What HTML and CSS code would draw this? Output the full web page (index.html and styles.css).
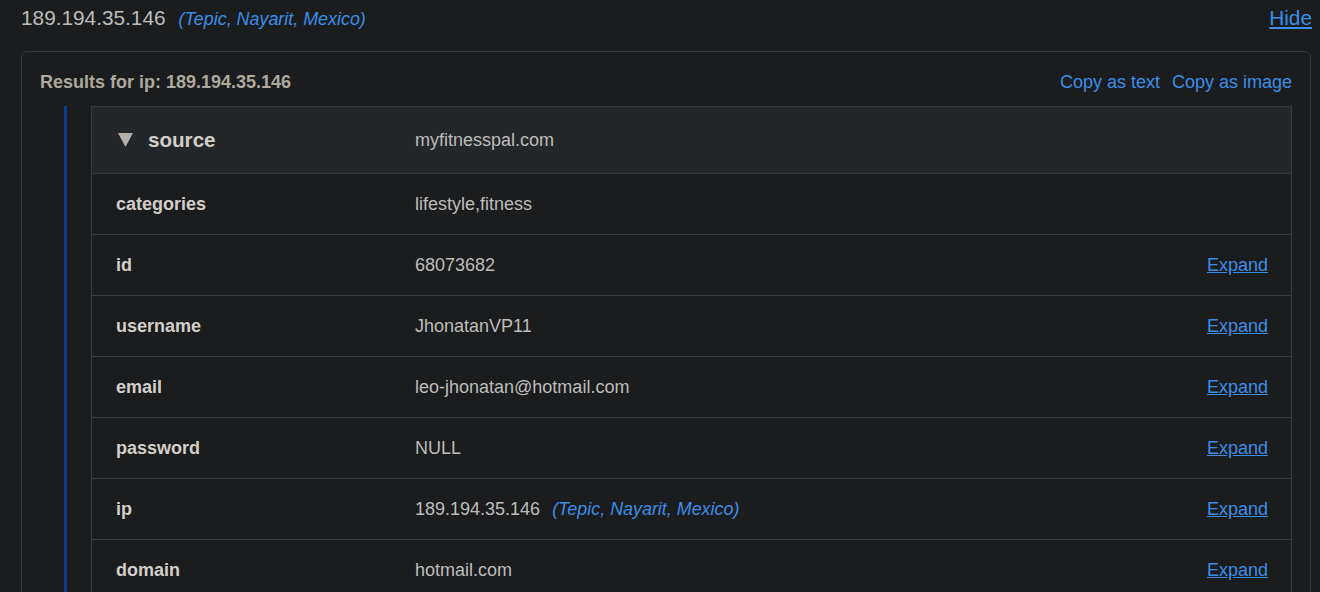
FILE: index.html
```html
<!DOCTYPE html>
<html lang="en">

<head>
  <meta charset="UTF-8">
  <meta name="viewport" content="width=device-width, initial-scale=1.0">
  <title>IP lookup results</title>
  <link rel="stylesheet" href="styles.css">
</head>

<body>
  <div class="lookup">
    <div class="lookup-head">
      <div class="lookup-title">
        <span class="ip">189.194.35.146</span>
        <span class="geo">(Tepic, Nayarit, Mexico)</span>
      </div>
      <a href="#" class="hide-link">Hide</a>
    </div>

    <div class="card">
      <div class="card-head">
        <span class="card-title">Results for ip: 189.194.35.146</span>
        <div class="copy-links">
          <a href="#" class="link">Copy as text</a>
          <a href="#" class="link">Copy as image</a>
        </div>
      </div>

      <div class="card-body">
        <div class="tree-line"></div>

        <div class="result-table">
          <div class="row row-source">
            <div class="key">
              <svg class="caret" width="15" height="14" viewBox="0 0 15 14">
                <polygon points="0,0 15,0 7.5,14" fill="#b3aea6" />
              </svg>
              source
            </div>
            <div class="value">myfitnesspal.com</div>
            <div class="action"></div>
          </div>
          <div class="row">
            <div class="key">categories</div>
            <div class="value">lifestyle,fitness</div>
            <div class="action"></div>
          </div>
          <div class="row">
            <div class="key">id</div>
            <div class="value">68073682</div>
            <div class="action"><a href="#" class="expand">Expand</a></div>
          </div>
          <div class="row">
            <div class="key">username</div>
            <div class="value">JhonatanVP11</div>
            <div class="action"><a href="#" class="expand">Expand</a></div>
          </div>
          <div class="row">
            <div class="key">email</div>
            <div class="value">leo-jhonatan@hotmail.com</div>
            <div class="action"><a href="#" class="expand">Expand</a></div>
          </div>
          <div class="row">
            <div class="key">password</div>
            <div class="value">NULL</div>
            <div class="action"><a href="#" class="expand">Expand</a></div>
          </div>
          <div class="row">
            <div class="key">ip</div>
            <div class="value">189.194.35.146 <span class="geo geo-small">(Tepic, Nayarit, Mexico)</span></div>
            <div class="action"><a href="#" class="expand">Expand</a></div>
          </div>
          <div class="row">
            <div class="key">domain</div>
            <div class="value">hotmail.com</div>
            <div class="action"><a href="#" class="expand">Expand</a></div>
          </div>
        </div>
      </div>
    </div>
  </div>
</body>

</html>
```

FILE: styles.css
```css
:root {
  --bg: #1b1c1e;
  --border: #3a3b3d;
  --blue: #3b8ee6;
  --key: #d3cfc8;
  --value: #bdbcba;
}

body {
  margin: 0;
  background: var(--bg);
  font-family: "Liberation Sans", Arial, sans-serif;
  font-size: 18px;
  color: var(--value);
  overflow: hidden;
}

a {
  color: var(--blue);
}

.lookup {
  padding: 6px 8px 0 21px;
}

.lookup-head {
  display: flex;
  justify-content: space-between;
  align-items: center;
  height: 24px;
}

.lookup-title {
  display: flex;
  align-items: baseline;
  gap: 13px;
}

.ip {
  font-size: 20.8px;
  color: #bdbcba;
}

.geo {
  font-style: italic;
  font-size: 17.9px;
  color: var(--blue);
}

.geo-small {
  margin-left: 7px;
}

.hide-link {
  font-size: 20.8px;
}

.card {
  margin-top: 21px;
  margin-right: 1px;
  border: 1px solid #35363a;
  border-radius: 6px;
  padding: 18px;
}

.card-head {
  display: flex;
  justify-content: space-between;
  align-items: center;
  height: 24px;
  margin-bottom: 12px;
}

.card-title {
  font-weight: bold;
  color: #aea99f;
}

.copy-links {
  display: flex;
  gap: 12px;
}

.link {
  text-decoration: none;
}

.card-body {
  display: flex;
  padding-left: 24px;
}

.tree-line {
  width: 3px;
  background: #0d3a8a;
  margin-right: 24px;
  flex-shrink: 0;
}

.result-table {
  flex: 1;
  border: 1px solid var(--border);
}

.row {
  display: grid;
  grid-template-columns: 299px 1fr auto;
  align-items: center;
  height: 60px;
  padding: 0 23px 0 24px;
  border-top: 1px solid var(--border);
}

.row:first-child {
  border-top: none;
}

.row-source {
  height: 66px;
  background: #24272a;
}

.key {
  font-weight: bold;
  color: var(--key);
}

.row-source .key {
  display: flex;
  align-items: center;
  font-size: 20.6px;
  padding-left: 2px;
}

.caret {
  margin-right: 15px;
}

.value {
  color: var(--value);
}

.expand {
  text-decoration: underline;
}
```
